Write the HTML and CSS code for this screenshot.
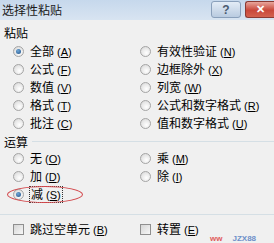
FILE: index.html
```html
<!DOCTYPE html>
<html>
<head>
<meta charset="utf-8">
<link rel="stylesheet" href="styles.css">
</head>
<body>
<div class="win">
  <div class="titlebar">
    <span class="title">选择性粘贴</span>
    <div class="btns">
      <span class="btn help">?</span>
      <span class="btn close">✕</span>
    </div>
  </div>
  <div class="content">
    <div class="label">粘贴</div>
    <div class="grid">
      <div class="opt"><span class="radio on"></span><span class="txt">全部<span class="mn">(<u>A</u>)</span></span></div>
      <div class="opt"><span class="radio"></span><span class="txt">有效性验证<span class="mn">(<u>N</u>)</span></span></div>
      <div class="opt"><span class="radio"></span><span class="txt">公式<span class="mn">(<u>F</u>)</span></span></div>
      <div class="opt"><span class="radio"></span><span class="txt">边框除外<span class="mn">(<u>X</u>)</span></span></div>
      <div class="opt"><span class="radio"></span><span class="txt">数值<span class="mn">(<u>V</u>)</span></span></div>
      <div class="opt"><span class="radio"></span><span class="txt">列宽<span class="mn">(<u>W</u>)</span></span></div>
      <div class="opt"><span class="radio"></span><span class="txt">格式<span class="mn">(<u>T</u>)</span></span></div>
      <div class="opt"><span class="radio"></span><span class="txt">公式和数字格式<span class="mn">(<u>R</u>)</span></span></div>
      <div class="opt"><span class="radio"></span><span class="txt">批注<span class="mn">(<u>C</u>)</span></span></div>
      <div class="opt"><span class="radio"></span><span class="txt">值和数字格式<span class="mn">(<u>U</u>)</span></span></div>
    </div>
    <div class="label sep"><span>运算</span><span class="line"></span></div>
    <div class="grid">
      <div class="opt"><span class="radio"></span><span class="txt">无<span class="mn">(<u>O</u>)</span></span></div>
      <div class="opt"><span class="radio"></span><span class="txt">乘<span class="mn">(<u>M</u>)</span></span></div>
      <div class="opt"><span class="radio"></span><span class="txt">加<span class="mn">(<u>D</u>)</span></span></div>
      <div class="opt"><span class="radio"></span><span class="txt">除<span class="mn">(<u>I</u>)</span></span></div>
      <div class="opt mark"><span class="radio on"></span><span class="txt focus">减<span class="mn">(<u>S</u>)</span></span><span class="ellipse"></span></div>
      <div class="opt"></div>
    </div>
    <div class="hline"></div>
    <div class="grid">
      <div class="opt"><span class="check"></span><span class="txt">跳过空单元<span class="mn">(<u>B</u>)</span></span></div>
      <div class="opt"><span class="check"></span><span class="txt">转置<span class="mn">(<u>E</u>)</span></span></div>
    </div>
  </div>
  <div class="wm"><span class="wm-r">ww</span><span class="wm-b">JZX88</span></div>
</div>
</body>
</html>
```
FILE: styles.css
```css
html, body {
  margin: 0;
  padding: 0;
  width: 274px;
  height: 243px;
  overflow: hidden;
  background: #f0f0f0;
}
.win {
  position: relative;
  width: 274px;
  height: 243px;
  overflow: hidden;
  font-family: "Noto Sans CJK SC", "Liberation Sans", sans-serif;
  font-size: 12px;
  color: #000;
}
.titlebar {
  height: 20px;
  display: flex;
  align-items: center;
  justify-content: space-between;
  background: linear-gradient(#c6d8ec, #d8e4f1);
}
.title {
  padding-left: 2px;
  font-size: 12px;
  color: #1a1a1a;
  line-height: 20px;
}
.btns {
  display: flex;
  gap: 4px;
  align-self: flex-start;
  padding-top: 1px;
}
.btn {
  height: 15px;
  display: flex;
  align-items: center;
  justify-content: center;
  border-radius: 3px;
  font-family: "Liberation Sans", sans-serif;
  font-weight: bold;
}
.help {
  width: 28px;
  border: 1px solid #8aa0bb;
  background: linear-gradient(#e3ecf6, #b9cbe0);
  color: #4a5a70;
  font-size: 12px;
}
.close {
  width: 28px;
  border: 1px solid #8b3a33;
  border-right: none;
  border-radius: 3px 0 0 3px;
  background: linear-gradient(#e8a69c, #c9483a 55%, #d3624f);
  color: #fff;
  font-size: 11px;
}
.content {
  padding-top: 4px;
}
.label {
  padding-left: 4px;
  line-height: 18px;
  height: 18px;
}
.label.sep {
  display: flex;
  align-items: center;
  gap: 4px;
  height: 15px;
  line-height: 15px;
  margin-top: 2px;
}
.line {
  flex: 1;
  height: 1px;
  background: #d5dfe5;
}
.grid {
  display: grid;
  grid-template-columns: 127px 1fr;
  padding-left: 13px;
}
.opt {
  height: 18px;
  display: flex;
  align-items: center;
  gap: 6px;
  position: relative;
}
.radio {
  width: 9px;
  height: 9px;
  border-radius: 50%;
  border: 1px solid #a5a5a5;
  background: radial-gradient(circle at 60% 65%, #ffffff 0%, #e6e6e6 60%, #cfcfcf 100%);
  flex: none;
  position: relative;
}
.radio.on::after {
  content: "";
  position: absolute;
  left: 2px;
  top: 2px;
  width: 5px;
  height: 5px;
  border-radius: 50%;
  background: radial-gradient(circle at 40% 35%, #6fa8d8, #1f4f86);
}
.check {
  width: 9px;
  height: 9px;
  border: 1px solid #8f8f8f;
  background: linear-gradient(135deg, #d6d6d6, #f7f7f7);
  flex: none;
}
.txt {
  white-space: nowrap;
  line-height: 14px;
}
.mn {
  font-family: "Liberation Sans", sans-serif;
  font-size: 11px;
  margin-left: 3px;
}
.focus {
  outline: 1px dotted #333;
  outline-offset: 0;
  padding: 0 1px;
}
.ellipse {
  position: absolute;
  left: -6px;
  top: 1px;
  width: 74px;
  height: 15px;
  border: 1.5px solid #d2464a;
  border-radius: 50%;
  pointer-events: none;
}
.hline {
  height: 1px;
  background: #d5dfe5;
  margin: 11px 0 5px 0;
}
.wm {
  position: absolute;
  left: 210px;
  top: 235px;
  display: flex;
  gap: 10px;
  font-family: "Liberation Sans", sans-serif;
  font-weight: bold;
  font-size: 8px;
  line-height: 8px;
}
.wm-r { color: #e05a5a; }
.wm-b { color: #6d8fc9; }
```
